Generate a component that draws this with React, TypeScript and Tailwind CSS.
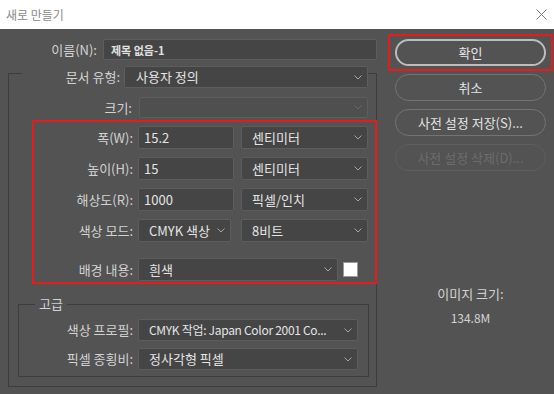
import React from "react";

const FONT = { fontFamily: '"Noto Sans CJK KR", "Noto Sans", sans-serif' };

const Chevron = ({ dim }: { dim?: boolean }) => (
  <svg width="8" height="5" viewBox="0 0 8 5" className="shrink-0">
    <path
      d="M0.5 0.5 L4 4 L7.5 0.5"
      fill="none"
      stroke={dim ? "#666666" : "#a6a6a6"}
      strokeWidth="1"
    />
  </svg>
);

const Select = ({
  value,
  className,
  textClass,
  disabled,
}: {
  value?: string;
  className: string;
  textClass?: string;
  disabled?: boolean;
}) => (
  <div
    className={`flex items-center justify-between rounded-[2px] border border-[#5d5d5d] pl-[10px] pr-[5px] ${
      disabled ? "bg-[#4f4f4f]" : "bg-[#454545] text-[#e4e4e4]"
    } ${className}`}
  >
    <span className={`whitespace-nowrap leading-[16px] ${textClass ?? "text-[13px]"}`}>{value}</span>
    <Chevron dim={disabled} />
  </div>
);

const Input = ({ value, className }: { value: string; className: string }) => (
  <div
    className={`flex items-center rounded-[2px] border border-[#5d5d5d] bg-[#454545] pl-[5px] text-[13px] leading-[16px] text-[#e4e4e4] ${className}`}
  >
    {value}
  </div>
);

const Label = ({ text, className }: { text: string; className: string }) => (
  <span className={`shrink-0 text-right text-[13px] leading-[16px] text-[#d2d2d2] ${className}`}>
    {text}
  </span>
);

const Button = ({
  text,
  primary,
  disabled,
}: {
  text: string;
  primary?: boolean;
  disabled?: boolean;
}) => (
  <div
    className={`flex h-[27px] w-[151px] items-center justify-center rounded-full text-[13px] leading-[16px] ${
      primary
        ? "border-2 border-[#bdbdbd] text-[#e6e6e6]"
        : disabled
          ? "border border-[#5e5e5e] text-[#6c6c6c]"
          : "border border-[#747474] text-[#e2e2e2]"
    }`}
  >
    {text}
  </div>
);

export default function App() {
  return (
    <div className="flex h-[394px] w-[554px] flex-col select-none" style={FONT}>
      <header className="flex h-[29px] shrink-0 items-center justify-between bg-white pl-[6px] pr-[7px]">
        <span className="text-[12px] leading-[16px] text-[#8a8a8a]">새로 만들기</span>
        <svg width="11" height="11" viewBox="0 0 11 11">
          <path d="M0.5 0.5 L10.5 10.5 M10.5 0.5 L0.5 10.5" stroke="#7a7a7a" strokeWidth="1" />
        </svg>
      </header>

      <section className="flex flex-1 bg-[#535353]">
        {/* left: form */}
        <div className="flex w-[388px] shrink-0 flex-col pt-[10px]">
          <div className="flex h-[21px] items-center">
            <Label text="이름(N):" className="w-[97px] mr-[6px]" />
            <div className="flex h-[21px] w-[274px] items-center rounded-[2px] border border-[#5d5d5d] bg-[#454545] pl-[7px] text-[11px] font-bold leading-[16px] text-[#e0e0e0]">
              제목 없음-1
            </div>
          </div>

          <div className="ml-[8px] mt-[13px] flex h-[314px] w-[369px] flex-col border border-[#3d3d3d]">
            <div className="-mt-[8px] flex h-[22px] items-center">
              <span className="ml-[13px] flex h-[22px] w-[102px] items-center justify-end bg-[#535353] pr-[4px] text-[13px] leading-[16px] text-[#d2d2d2]">
                문서 유형:
              </span>
              <Select value="사용자 정의" className="h-[22px] w-[244px] pl-[11px]" />
            </div>

            <div className="mt-[9px] flex h-[21px] items-center">
              <Label text="크기:" className="w-[123px] mr-[7px] text-[#6e6e6e]" />
              <Select disabled className="h-[21px] w-[229px]" />
            </div>

            <div className="ml-[23px] mt-[2px] flex w-[345px] flex-col border-2 border-[#e51c1c] pb-[1px] pt-[4px]">
              <div className="flex flex-col gap-[8px]">
                {[
                  ["폭(W):", "15.2", "센티미터"],
                  ["높이(H):", "15", "센티미터"],
                  ["해상도(R):", "1000", "픽셀/인치"],
                ].map(([label, value, unit]) => (
                  <div key={label} className="flex h-[23px] items-center">
                    <Label text={label} className="w-[99px] mr-[5px]" />
                    <Input value={value} className="h-[23px] w-[96px]" />
                    <Select value={unit} className="ml-[7px] h-[23px] w-[127px] pl-[9px]" />
                  </div>
                ))}
                <div className="flex h-[23px] items-center">
                  <Label text="색상 모드:" className="w-[99px] mr-[5px]" />
                  <Select value="CMYK 색상" className="h-[23px] w-[93px]" />
                  <Select value="8비트" className="ml-[10px] h-[23px] w-[127px] pl-[9px]" />
                </div>
              </div>
              <div className="mt-[16px] flex h-[23px] items-center">
                <Label text="배경 내용:" className="w-[99px] mr-[5px]" />
                <Select value="흰색" className="h-[23px] w-[200px]" />
                <div className="ml-[5px] h-[15px] w-[15px] border border-[#9a9a9a] bg-white" />
              </div>
            </div>

            <div className="relative ml-[9px] mt-[20px] flex w-[351px] flex-col gap-[7px] border border-[#3d3d3d] pb-[6px] pt-[14px]">
              <span className="absolute -top-[10px] left-[16px] bg-[#535353] px-[4px] text-[13px] leading-[18px] text-[#d2d2d2]">
                고급
              </span>
              <div className="flex h-[22px] items-center">
                <Label text="색상 프로필:" className="w-[114px] mr-[5px]" />
                <Select
                  value="CMYK 작업: Japan Color 2001 Co..."
                  className="h-[22px] w-[220px]"
                  textClass="text-[12px] tracking-[-0.3px]"
                />
              </div>
              <div className="flex h-[22px] items-center">
                <Label text="픽셀 종횡비:" className="w-[114px] mr-[5px]" />
                <Select value="정사각형 픽셀" className="h-[22px] w-[220px]" />
              </div>
            </div>
          </div>
        </div>

        {/* right: buttons */}
        <div className="flex w-[166px] flex-col items-start">
          <div className="mt-[5px] border-2 border-[#e51c1c] px-[5px] py-[3px]">
            <Button text="확인" primary />
          </div>
          <div className="ml-[7px] mt-[3px] flex flex-col gap-[8px]">
            <Button text="취소" />
            <Button text="사전 설정 저장(S)..." />
            <Button text="사전 설정 삭제(D)..." disabled />
          </div>
          <div className="mt-[114px] w-[165px] text-center text-[13px] leading-[18px] text-[#d2d2d2]">
            이미지 크기:
          </div>
          <div className="mt-[6px] w-[165px] text-center text-[12px] leading-[18px] text-[#d2d2d2]">
            134.8M
          </div>
        </div>
      </section>
    </div>
  );
}
